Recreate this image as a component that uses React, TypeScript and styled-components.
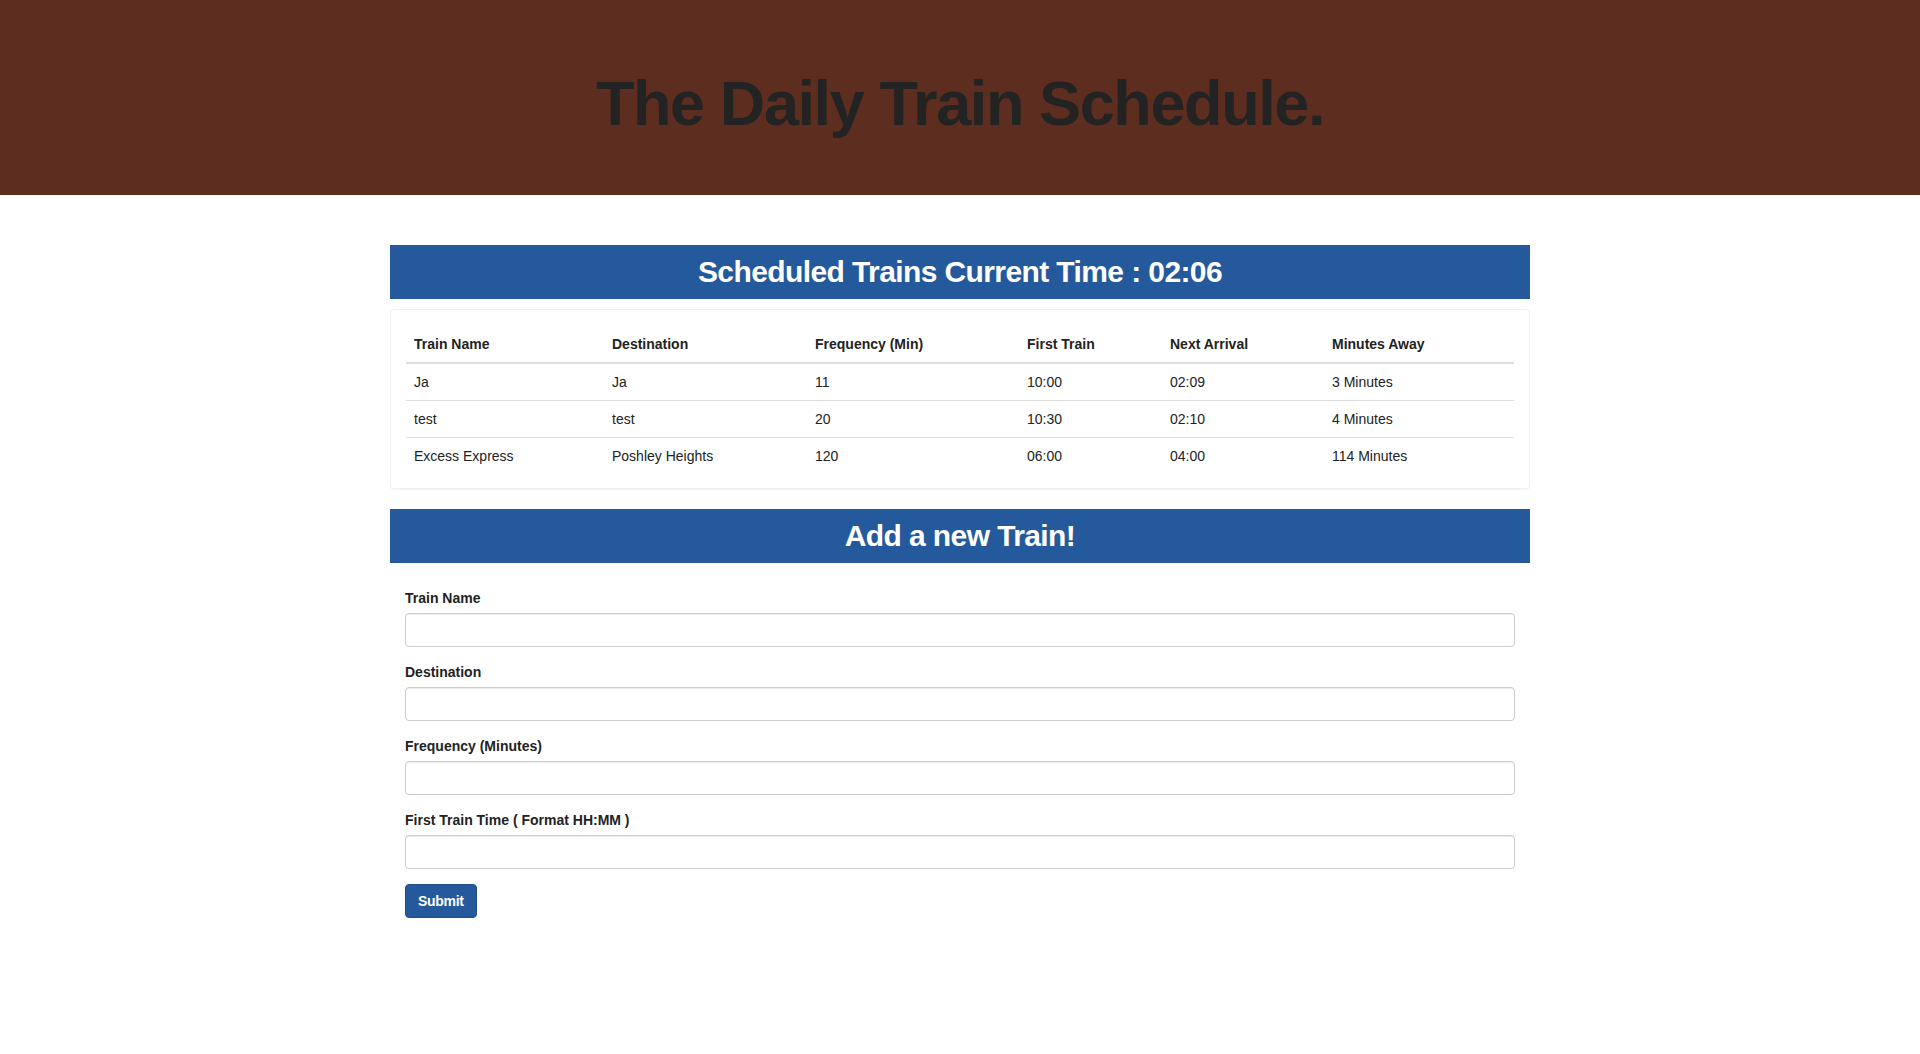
import styled, { createGlobalStyle } from "styled-components";

const GlobalStyle = createGlobalStyle`
  * {
    box-sizing: border-box;
  }
  body {
    margin: 0;
    background: #fff;
    color: #333;
    font-family: "Liberation Sans", Arial, Helvetica, sans-serif;
    font-size: 14px;
    line-height: 20px;
  }
`;

const Jumbotron = styled.header`
  height: 195px;
  padding-top: 69px;
  background-color: #5d2e1f;
`;

const Title = styled.h1`
  margin: 0;
  text-align: center;
  font-size: 63px;
  line-height: 69px;
  font-weight: 700;
  letter-spacing: -1.4px;
  color: #232323;
`;

const Container = styled.main`
  width: 1140px;
  margin: 50px auto 0;
`;

const SectionHeading = styled.h2<{ $gap?: number }>`
  margin: ${(p) => p.$gap ?? 0}px 0 0;
  padding: 10px 0 11px;
  background-color: #245a9b;
  color: #fff;
  text-align: center;
  font-size: 30px;
  line-height: 33px;
  font-weight: 700;
  letter-spacing: -0.6px;
`;

const Card = styled.section`
  margin-top: 10px;
  padding: 16px 15px 14px;
  border: 1px solid #f1f1f1;
  border-radius: 4px;
  box-shadow: 0 1px 1px rgba(0, 0, 0, 0.05);
`;

const Table = styled.table`
  width: 100%;
  border-collapse: collapse;
  table-layout: fixed;
`;

const HeadCell = styled.th<{ $width: number }>`
  width: ${(p) => p.$width}px;
  padding: 8px;
  text-align: left;
  font-weight: 700;
  color: #222;
  border-bottom: 2px solid #ddd;
`;

const Cell = styled.td`
  padding: 8px;
  color: #222;
  border-top: 1px solid #ddd;
`;

const Form = styled.form`
  padding: 25px 15px 0;
`;

const FormGroup = styled.div`
  margin-bottom: 15px;
`;

const Label = styled.label`
  display: block;
  margin-bottom: 5px;
  font-weight: 700;
  color: #222;
`;

const Input = styled.input`
  display: block;
  width: 100%;
  height: 34px;
  padding: 6px 12px;
  font-family: inherit;
  font-size: 14px;
  color: #555;
  background: #fff;
  border: 1px solid #ccc;
  border-radius: 4px;
  box-shadow: inset 0 1px 1px rgba(0, 0, 0, 0.075);
`;

const SubmitButton = styled.button`
  height: 34px;
  padding: 6px 12px;
  font-family: inherit;
  font-size: 14px;
  font-weight: 700;
  letter-spacing: -0.3px;
  color: #fff;
  background-color: #245a9b;
  border: 1px solid #1f4f88;
  border-radius: 4px;
  cursor: pointer;
`;

const columns = [
  { label: "Train Name", width: 198 },
  { label: "Destination", width: 203 },
  { label: "Frequency (Min)", width: 212 },
  { label: "First Train", width: 143 },
  { label: "Next Arrival", width: 162 },
  { label: "Minutes Away", width: 190 },
];

const trains = [
  ["Ja", "Ja", "11", "10:00", "02:09", "3 Minutes"],
  ["test", "test", "20", "10:30", "02:10", "4 Minutes"],
  ["Excess Express", "Poshley Heights", "120", "06:00", "04:00", "114 Minutes"],
];

const fields = [
  { id: "train-name", label: "Train Name" },
  { id: "destination", label: "Destination" },
  { id: "frequency", label: "Frequency (Minutes)" },
  { id: "first-train", label: "First Train Time ( Format HH:MM )" },
];

export default function App() {
  return (
    <>
      <GlobalStyle />
      <Jumbotron>
        <Title>The Daily Train Schedule.</Title>
      </Jumbotron>
      <Container>
        <SectionHeading>Scheduled Trains Current Time : 02:06</SectionHeading>
        <Card>
          <Table>
            <thead>
              <tr>
                {columns.map((c) => (
                  <HeadCell key={c.label} $width={c.width}>
                    {c.label}
                  </HeadCell>
                ))}
              </tr>
            </thead>
            <tbody>
              {trains.map((row, i) => (
                <tr key={i}>
                  {row.map((v, j) => (
                    <Cell key={j}>{v}</Cell>
                  ))}
                </tr>
              ))}
            </tbody>
          </Table>
        </Card>
        <SectionHeading $gap={20}>Add a new Train!</SectionHeading>
        <Form onSubmit={(e) => e.preventDefault()}>
          {fields.map((f) => (
            <FormGroup key={f.id}>
              <Label htmlFor={f.id}>{f.label}</Label>
              <Input id={f.id} type="text" />
            </FormGroup>
          ))}
          <SubmitButton type="submit">Submit</SubmitButton>
        </Form>
      </Container>
    </>
  );
}
